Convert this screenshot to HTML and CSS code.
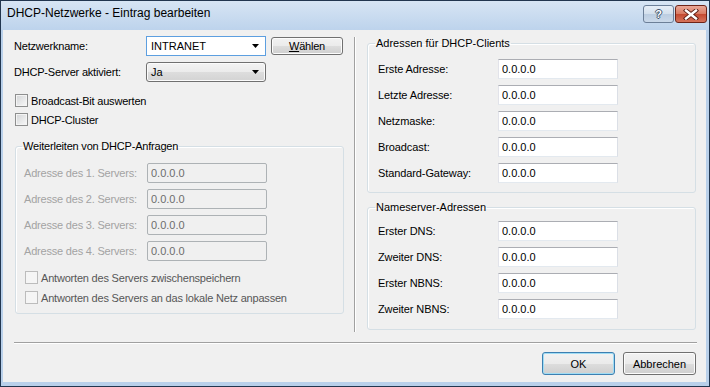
FILE: index.html
```html
<!DOCTYPE html>
<html lang="de">
<head>
    <meta charset="UTF-8">
    <title>DHCP-Netzwerke - Eintrag bearbeiten</title>
    <link rel="stylesheet" href="styles.css">
</head>
<body>
    <div class="window">
        <div class="titlebar">
            <span class="title">DHCP-Netzwerke - Eintrag bearbeiten</span>
            <div class="caption-buttons">
                <span class="cap-btn help">?</span>
                <span class="cap-btn close">
                    <svg width="16" height="11" viewBox="0 0 16 11">
                        <path d="M3 1.5 L13 9.5 M13 1.5 L3 9.5" stroke="#5a1d14" stroke-width="4.2" stroke-linecap="square" fill="none"/>
                        <path d="M3 1.5 L13 9.5 M13 1.5 L3 9.5" stroke="#fff" stroke-width="2.4" stroke-linecap="square" fill="none"/>
                    </svg>
                </span>
            </div>
        </div>

        <div class="frame-body">
            <div class="client">
                <div class="columns">
                    <div class="col-left">
                        <div class="field-row">
                            <span class="label label-wide">Netzwerkname:</span>
                            <div class="combo combo-edit">
                                <span>INTRANET</span>
                                <svg class="arrow" width="7" height="4" viewBox="0 0 7 4"><polygon points="0,0 7,0 3.5,4" fill="#000"/></svg>
                            </div>
                            <button class="btn btn-choose"><u>W</u>ählen</button>
                        </div>
                        <div class="field-row row-gap">
                            <span class="label label-wide">DHCP-Server aktiviert:</span>
                            <div class="combo combo-list">
                                <span>Ja</span>
                                <svg class="arrow" width="7" height="4" viewBox="0 0 7 4"><polygon points="0,0 7,0 3.5,4" fill="#000"/></svg>
                            </div>
                        </div>

                        <label class="check-row first-check"><span class="checkbox"></span>Broadcast-Bit auswerten</label>
                        <label class="check-row next-check"><span class="checkbox"></span>DHCP-Cluster</label>

                        <fieldset class="group group-forward">
                            <legend>Weiterleiten von DHCP-Anfragen</legend>
                            <div class="field-row disabled">
                                <span class="label label-forward">Adresse des 1. Servers:</span>
                                <input class="textbox" type="text" value="0.0.0.0" disabled>
                            </div>
                            <div class="field-row row-gap disabled">
                                <span class="label label-forward">Adresse des 2. Servers:</span>
                                <input class="textbox" type="text" value="0.0.0.0" disabled>
                            </div>
                            <div class="field-row row-gap disabled">
                                <span class="label label-forward">Adresse des 3. Servers:</span>
                                <input class="textbox" type="text" value="0.0.0.0" disabled>
                            </div>
                            <div class="field-row row-gap disabled">
                                <span class="label label-forward">Adresse des 4. Servers:</span>
                                <input class="textbox" type="text" value="0.0.0.0" disabled>
                            </div>
                            <label class="check-row check-disabled group-check1"><span class="checkbox"></span>Antworten des Servers zwischenspeichern</label>
                            <label class="check-row check-disabled group-check2"><span class="checkbox"></span>Antworten des Servers an das lokale Netz anpassen</label>
                        </fieldset>
                    </div>

                    <div class="vsep"></div>

                    <div class="col-right">
                        <fieldset class="group group-clients">
                            <legend>Adressen für DHCP-Clients</legend>
                            <div class="field-row">
                                <span class="label label-right">Erste Adresse:</span>
                                <input class="textbox" type="text" value="0.0.0.0">
                            </div>
                            <div class="field-row row-gap">
                                <span class="label label-right">Letzte Adresse:</span>
                                <input class="textbox" type="text" value="0.0.0.0">
                            </div>
                            <div class="field-row row-gap">
                                <span class="label label-right">Netzmaske:</span>
                                <input class="textbox" type="text" value="0.0.0.0">
                            </div>
                            <div class="field-row row-gap">
                                <span class="label label-right">Broadcast:</span>
                                <input class="textbox" type="text" value="0.0.0.0">
                            </div>
                            <div class="field-row row-gap">
                                <span class="label label-right">Standard-Gateway:</span>
                                <input class="textbox" type="text" value="0.0.0.0">
                            </div>
                        </fieldset>

                        <fieldset class="group group-dns">
                            <legend>Nameserver-Adressen</legend>
                            <div class="field-row">
                                <span class="label label-right">Erster DNS:</span>
                                <input class="textbox" type="text" value="0.0.0.0">
                            </div>
                            <div class="field-row row-gap">
                                <span class="label label-right">Zweiter DNS:</span>
                                <input class="textbox" type="text" value="0.0.0.0">
                            </div>
                            <div class="field-row row-gap">
                                <span class="label label-right">Erster NBNS:</span>
                                <input class="textbox" type="text" value="0.0.0.0">
                            </div>
                            <div class="field-row row-gap">
                                <span class="label label-right">Zweiter NBNS:</span>
                                <input class="textbox" type="text" value="0.0.0.0">
                            </div>
                        </fieldset>
                    </div>
                </div>

                <div class="hsep"></div>

                <div class="footer">
                    <button class="btn btn-default">OK</button>
                    <button class="btn">Abbrechen</button>
                </div>
            </div>
        </div>
    </div>
</body>
</html>
```

FILE: styles.css
```css
* {
    box-sizing: border-box;
}

body {
    margin: 0;
    font-family: "Liberation Sans", Arial, sans-serif;
    font-size: 11px;
    color: #000;
    background: #fff;
}

.window {
    width: 710px;
    height: 387px;
    border: 1px solid #22364f;
    background: #b9d0ea;
    display: flex;
    flex-direction: column;
}

.titlebar {
    height: 29px;
    flex: none;
    display: flex;
    justify-content: space-between;
    align-items: flex-start;
    padding: 0 2px 0 6px;
    background: linear-gradient(#d7e5f4, #bdd3ec);
}

.title {
    font-size: 12px;
    line-height: 15px;
    margin-top: 5px;
}

.caption-buttons {
    display: flex;
    gap: 1px;
    margin-top: 4px;
}

.cap-btn {
    height: 18px;
    border-radius: 3px;
    display: flex;
    align-items: center;
    justify-content: center;
}

.cap-btn.help {
    width: 31px;
    border: 1px solid #6c7f98;
    background: linear-gradient(#e6eef7 0%, #d4e0ed 48%, #bccde1 52%, #cad9ea 100%);
    color: #fff;
    font-weight: bold;
    font-size: 11px;
    text-shadow: 1px 0 0 #3d526c, -1px 0 0 #3d526c, 0 1px 0 #3d526c, 0 -1px 0 #3d526c;
}

.cap-btn.close {
    width: 32px;
    border: 1px solid #6e2418;
    background: linear-gradient(#e9a898 0%, #d97b63 48%, #c44a31 52%, #d5735c 100%);
}

.frame-body {
    flex: 1;
    padding: 0 3px 4px 2px;
    background: #b9d0ea;
}

.client {
    height: 100%;
    background: #f0f0f0;
}

.columns {
    display: flex;
    height: 302px;
}

.col-left {
    width: 351px;
    flex: none;
    padding: 6px 0 0 11px;
}

.vsep {
    width: 2px;
    flex: none;
    margin-top: 7px;
    border-left: 1px solid #a0a0a0;
    border-right: 1px solid #fff;
}

.col-right {
    flex: 1;
    padding: 7px 0 0 11px;
}

.field-row {
    display: flex;
    align-items: center;
    height: 20px;
}

.row-gap {
    margin-top: 6px;
}

.label {
    flex: none;
    letter-spacing: -0.2px;
}

.label-wide {
    width: 132px;
}

.label-forward {
    width: 123px;
}

.label-right {
    width: 120px;
    letter-spacing: -0.1px;
}

.disabled .label {
    color: #a3a3a3;
}

.combo {
    width: 120px;
    height: 20px;
    display: flex;
    align-items: center;
    justify-content: space-between;
    padding: 0 6px 0 4px;
}

.combo-edit {
    background: #fff;
    border: 1px solid #5d9fe0;
}

.combo-list {
    border: 1px solid #707070;
    border-radius: 3px;
    background: linear-gradient(#f3f3f3 0%, #ebebeb 50%, #dddddd 51%, #d3d3d3 100%);
    box-shadow: inset 0 0 0 1px #fbfbfb;
}

.btn {
    width: 73px;
    height: 23px;
    padding: 0;
    border: 1px solid #707070;
    border-radius: 3px;
    background: linear-gradient(#f2f2f2 0%, #ebebeb 50%, #dddddd 51%, #cfcfcf 100%);
    box-shadow: inset 0 0 0 1px #fcfcfc;
    font-family: inherit;
    font-size: 11px;
    color: #000;
}

.btn-choose {
    width: 72px;
    height: 18px;
    margin-left: 5px;
    letter-spacing: -0.2px;
}

.btn-default {
    border-color: #3c7fb1;
    box-shadow: inset 0 0 0 1px #9fdcf4;
}

.check-row {
    display: flex;
    align-items: center;
    gap: 3px;
    height: 13px;
    padding-left: 1px;
    letter-spacing: -0.2px;
}

.first-check {
    margin-top: 12px;
}

.next-check {
    margin-top: 6px;
}

.checkbox {
    width: 13px;
    height: 13px;
    flex: none;
    border: 1px solid #8e8f8f;
    background: linear-gradient(135deg, #d2d4d6, #f9f9f9);
    box-shadow: inset 0 0 0 1px #f4f4f4;
}

.check-disabled {
    color: #575757;
}

.check-disabled .checkbox {
    border-color: #bcbcbc;
    background: #f5f5f5;
    box-shadow: none;
}

.group {
    margin: 0;
    border: 1px solid #d5dfe5;
    border-radius: 3px;
    box-shadow: inset 1px 1px 0 #fff;
    min-inline-size: 0;
}

.group legend {
    line-height: 13px;
    padding: 0 1px;
}

.group-forward {
    width: 329px;
    margin: 14px 0 0 1px;
    padding: 10px 0 9px 8px;
}

.group-forward legend {
    margin-left: -2px;
    letter-spacing: -0.2px;
}

.group-clients {
    width: 329px;
    padding: 9px 0 9px 10px;
}

.group-dns {
    width: 329px;
    margin-top: 8px;
    padding: 7px 0 10px 10px;
}

.group-clients legend,
.group-dns legend {
    margin-left: -3px;
}

.group-check1 {
    margin-top: 10px;
}

.group-check2 {
    margin-top: 7px;
}

.textbox {
    width: 120px;
    height: 20px;
    margin: 0;
    padding: 0 3px;
    border: 1px solid;
    border-color: #abadb3 #dbdfe6 #e3e9ef #e2e3ea;
    background: #fff;
    font-family: inherit;
    font-size: 11px;
    color: #000;
}

.textbox:disabled {
    border-color: #adb2b5;
    border-radius: 2px;
    background: #f0f0f0;
    color: #6d6d6d;
}

.hsep {
    height: 2px;
    margin: 10px 9px 0 11px;
    border-top: 1px solid #a0a0a0;
    border-bottom: 1px solid #fff;
}

.footer {
    display: flex;
    justify-content: flex-end;
    gap: 8px;
    padding: 8px 10px 0 0;
}
```
